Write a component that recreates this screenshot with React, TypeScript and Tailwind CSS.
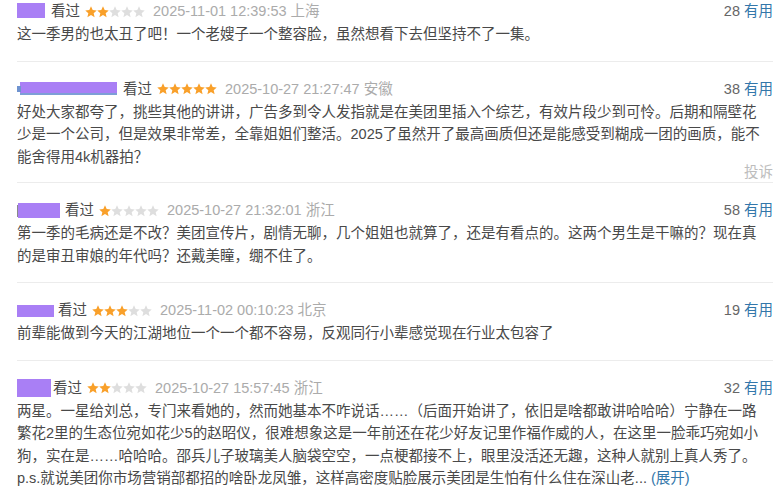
/* Comment list: short reviews with redacted names, star ratings and "useful" counts. */

type Review = {
  boxW: number;
  boxH: number;
  boxShift: number;
  gap: number;
  rating: number;
  time: string;
  place: string;
  votes: number;
  lines: string[];
  more?: boolean;
  report?: boolean;
  residue?: "blue" | "gray";
};

const REVIEWS: Review[] = [
  {
    boxW: 28,
    boxH: 15,
    boxShift: -2,
    gap: 6,
    rating: 2,
    time: "2025-11-01 12:39:53",
    place: "上海",
    votes: 28,
    lines: ["这一季男的也太丑了吧！一个老嫂子一个整容脸，虽然想看下去但坚持不了一集。"],
  },
  {
    boxW: 97,
    boxH: 13,
    boxShift: -1,
    gap: 6,
    rating: 5,
    time: "2025-10-27 21:27:47",
    place: "安徽",
    votes: 38,
    residue: "blue",
    report: true,
    lines: [
      "好处大家都夸了，挑些其他的讲讲，广告多到令人发指就是在美团里插入个综艺，有效片段少到可怜。后期和隔壁花",
      "少是一个公司，但是效果非常差，全靠姐姐们整活。2025了虽然开了最高画质但还是能感受到糊成一团的画质，能不",
      "能舍得用4k机器拍？",
    ],
  },
  {
    boxW: 42,
    boxH: 15,
    boxShift: -1,
    gap: 5,
    rating: 1,
    time: "2025-10-27 21:32:01",
    place: "浙江",
    votes: 58,
    residue: "gray",
    lines: [
      "第一季的毛病还是不改？美团宣传片，剧情无聊，几个姐姐也就算了，还是有看点的。这两个男生是干嘛的？现在真",
      "的是审丑审娘的年代吗？还戴美瞳，绷不住了。",
    ],
  },
  {
    boxW: 37,
    boxH: 12,
    boxShift: 0,
    gap: 4,
    rating: 3,
    time: "2025-11-02 00:10:23",
    place: "北京",
    votes: 19,
    lines: ["前辈能做到今天的江湖地位一个一个都不容易，反观同行小辈感觉现在行业太包容了"],
  },
  {
    boxW: 34,
    boxH: 18,
    boxShift: 0,
    gap: 2,
    rating: 2,
    time: "2025-10-27 15:57:45",
    place: "浙江",
    votes: 32,
    more: true,
    lines: [
      "两星。一星给刘总，专门来看她的，然而她基本不咋说话……（后面开始讲了，依旧是啥都敢讲哈哈哈）宁静在一路",
      "繁花2里的生态位宛如花少5的赵昭仪，很难想象这是一年前还在花少好友记里作福作威的人，在这里一脸乖巧宛如小",
      "狗，实在是……哈哈哈。邵兵儿子玻璃美人脑袋空空，一点梗都接不上，眼里没活还无趣，这种人就别上真人秀了。",
      "p.s.就说美团你市场营销部都招的啥卧龙凤雏，这样高密度贴脸展示美团是生怕有什么住在深山老...",
    ],
  },
];

function Star({ on }: { on: boolean }) {
  return (
    <svg width="12" height="12" viewBox="1 1.5 22 21" className="shrink-0">
      <path
        d="M12 1.5l3.1 6.9 7.4.7-5.6 5 1.7 7.4L12 17.6l-6.6 3.9 1.7-7.4-5.6-5 7.4-.7z"
        fill={on ? "#f9a02a" : "#dedede"}
      />
    </svg>
  );
}

function Stars({ n }: { n: number }) {
  return (
    <span className="flex items-center">
      {[0, 1, 2, 3, 4].map((i) => (
        <Star key={i} on={i < n} />
      ))}
    </span>
  );
}

function Name({ r }: { r: Review }) {
  return (
    <span className="relative flex items-center shrink-0">
      {r.residue === "gray" && <span className="w-[1px] h-[12px] bg-[#8a8a8a]" />}
      <span
        className={`block bg-[#a97ff5] ${r.residue === "blue" ? "ml-[3px] border-b-2 border-[#7d9fd6]" : ""}`}
        style={{ width: r.boxW, height: r.boxH, marginTop: r.boxShift }}
      />
      {r.residue === "blue" && (
        <span className="absolute left-0 bottom-[3px] w-[4px] h-[6px] bg-[#6f93d0]" />
      )}
    </span>
  );
}

function ReviewItem({ r, first }: { r: Review; first: boolean }) {
  return (
    <div
      className={`border-b border-[#ececec] ${first ? "pt-0" : "pt-[16px]"} ${
        r.report ? "pb-[2px]" : "pb-[15px]"
      }`}
    >
      <div className="flex items-center h-[23px] leading-[23px]">
        <Name r={r} />
        <span className="text-[#4a4a4a]" style={{ marginLeft: r.gap }}>
          看过
        </span>
        <span className="ml-[5px]">
          <Stars n={r.rating} />
        </span>
        <span className="ml-[8px] text-[#ababab]">
          {r.time} {r.place}
        </span>
        <span className="ml-auto text-[#666]">
          {r.votes} <span className="text-[#3377aa]">有用</span>
        </span>
      </div>
      <div className="leading-[22.5px] text-[#494949]">
        {r.lines.map((l, i) => (
          <div key={i} className="whitespace-nowrap">
            {l}
            {r.more && i === r.lines.length - 1 && (
              <span className="text-[#3377aa]"> (展开)</span>
            )}
          </div>
        ))}
      </div>
      {r.report && (
        <div className="-mt-[4px] text-right leading-[16px] text-[#bdbdbd]">投诉</div>
      )}
    </div>
  );
}

export default function App() {
  return (
    <div
      className="min-h-screen bg-white pl-[17px] pr-[8px] text-[14.5px] overflow-hidden"
      style={{ fontFamily: '"Liberation Sans", Arial, "Noto Sans CJK SC", sans-serif' }}
    >
      {REVIEWS.map((r, i) => (
        <ReviewItem key={i} r={r} first={i === 0} />
      ))}
    </div>
  );
}
